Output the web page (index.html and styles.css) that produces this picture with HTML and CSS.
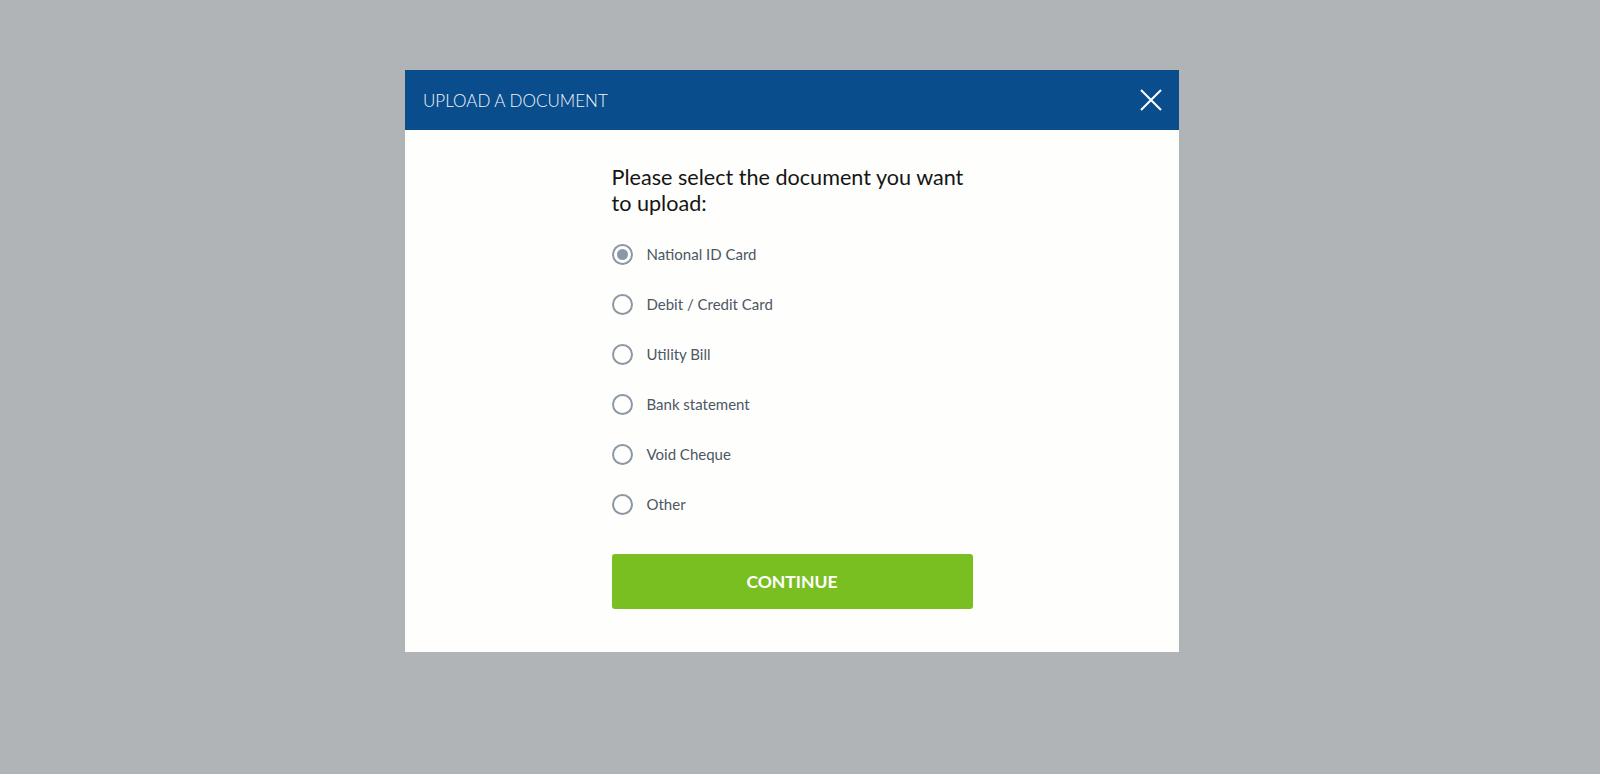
FILE: index.html
```html
<!DOCTYPE html>
<html lang="en">
<head>
<meta charset="utf-8">
<title>Upload a document</title>
<link rel="stylesheet" href="styles.css">
</head>
<body>
<div class="overlay">
  <div class="modal">
    <div class="modal-header">
      <span class="modal-title">UPLOAD A DOCUMENT</span>
      <button class="close" aria-label="Close">
        <svg width="22" height="22" viewBox="0 0 22 22"><path d="M1 1 L21 21 M21 1 L1 21" stroke="#ffffff" stroke-width="2" fill="none"/></svg>
      </button>
    </div>
    <div class="modal-body">
      <div class="content">
        <h2 class="question">Please select the document you want to upload:</h2>
        <ul class="options">
          <li class="option checked"><span class="radio"></span><span class="label">National ID Card</span></li>
          <li class="option"><span class="radio"></span><span class="label">Debit / Credit Card</span></li>
          <li class="option"><span class="radio"></span><span class="label">Utility Bill</span></li>
          <li class="option"><span class="radio"></span><span class="label">Bank statement</span></li>
          <li class="option"><span class="radio"></span><span class="label">Void Cheque</span></li>
          <li class="option"><span class="radio"></span><span class="label">Other</span></li>
        </ul>
        <button class="continue">CONTINUE</button>
      </div>
    </div>
  </div>
</div>
</body>
</html>
```

FILE: styles.css
```css
* { box-sizing: border-box; }
html, body { margin: 0; padding: 0; }
body {
  background: #b1b4b6;
  font-family: Lato, "Open Sans", sans-serif;
  width: 1600px;
  height: 774px;
}
.overlay {
  display: flex;
  justify-content: center;
  padding-top: 70px;
  padding-right: 16px;
}
.modal {
  width: 774px;
  background: #fefefd;
}
.modal-header {
  height: 60px;
  background: #0a4d8c;
  display: flex;
  align-items: center;
  justify-content: space-between;
  padding: 0 17px 0 18px;
}
.modal-title {
  color: #f2f6fa;
  font-size: 17px;
  font-weight: 300;
}
.close {
  background: none;
  border: 0;
  padding: 0;
  width: 22px;
  height: 22px;
  display: flex;
  cursor: pointer;
}
.modal-body {
  display: flex;
  justify-content: center;
  padding: 34px 0 43px;
}
.content {
  width: 361px;
}
.question {
  margin: 0;
  font-size: 21.6px;
  font-weight: 400;
  line-height: 26px;
  color: #151515;
}
.options {
  list-style: none;
  margin: 13px 0 0;
  padding: 0;
}
.option {
  display: flex;
  align-items: center;
  height: 50px;
}
.radio {
  width: 21px;
  height: 21px;
  border: 2px solid #8c98a4;
  border-radius: 50%;
  display: flex;
  align-items: center;
  justify-content: center;
  margin-right: 14px;
}
.option.checked .radio::after {
  content: "";
  width: 11px;
  height: 11px;
  border-radius: 50%;
  background: #8b97a6;
}
.label {
  font-size: 15px;
  color: #4d5763;
}
.continue {
  display: block;
  margin-top: 25px;
  width: 361px;
  height: 55px;
  background: #7abf22;
  border: 0;
  border-radius: 3px;
  color: #ffffff;
  font-family: Lato, "Open Sans", sans-serif;
  font-weight: 700;
  font-size: 17.5px;
  cursor: pointer;
}
```
